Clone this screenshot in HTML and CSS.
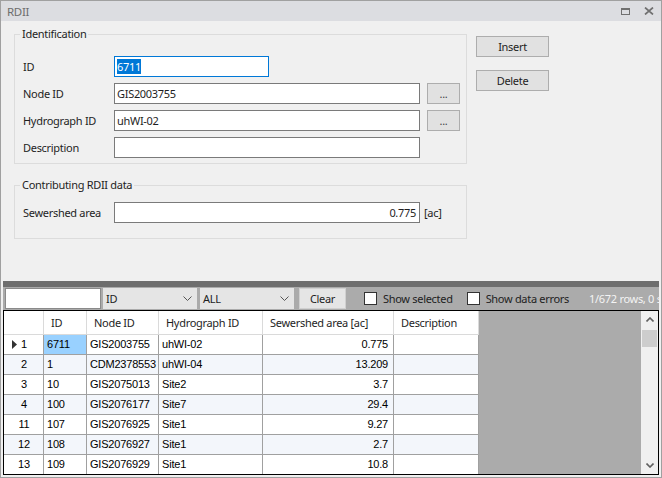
FILE: index.html
```html
<!DOCTYPE html>
<html lang="en">
<head>
  <meta charset="UTF-8">
  <title>RDII</title>
  <link rel="stylesheet" href="styles.css">
</head>
<body>
  <div class="window">
    <div class="titlebar">
      <span class="title">RDII</span>
      <span class="tb-icons">
        <svg width="9" height="7" viewBox="0 0 9 7"><rect x="0.5" y="0.5" width="8" height="6" fill="none" stroke="#707070"/><rect x="0" y="0" width="9" height="2" fill="#707070"/></svg>
        <svg width="10" height="8" viewBox="0 0 10 8"><path d="M1 0.5 L9 7.5 M9 0.5 L1 7.5" stroke="#707070" stroke-width="1.7" fill="none"/></svg>
      </span>
    </div>

    <div class="editor">
      <div class="groups">
        <fieldset class="group ident">
          <legend>Identification</legend>
          <div class="rows">
            <div class="field"><label>ID</label><div class="textbox short"><span class="sel">6711</span></div></div>
            <div class="field"><label>Node ID</label><div class="textbox long">GIS2003755</div><button class="btn browse">...</button></div>
            <div class="field"><label>Hydrograph ID</label><div class="textbox long">uhWI-02</div><button class="btn browse">...</button></div>
            <div class="field"><label>Description</label><div class="textbox long"></div></div>
          </div>
        </fieldset>
        <fieldset class="group contrib">
          <legend>Contributing RDII data</legend>
          <div class="field"><label>Sewershed area</label><div class="textbox long num">0.775</div><span class="unit">[ac]</span></div>
        </fieldset>
      </div>
      <div class="actions">
        <button class="btn">Insert</button>
        <button class="btn">Delete</button>
      </div>
    </div>

    <div class="splitter"></div>

    <div class="lower">
      <div class="toolbar">
        <div class="search"></div>
        <div class="combo c-id">ID<svg width="9" height="5" viewBox="0 0 9 5"><polyline points="0.5,0.5 4.5,4.5 8.5,0.5" fill="none" stroke="#555"/></svg></div>
        <div class="combo c-all">ALL<svg width="9" height="5" viewBox="0 0 9 5"><polyline points="0.5,0.5 4.5,4.5 8.5,0.5" fill="none" stroke="#555"/></svg></div>
        <button class="btn clear">Clear</button>
        <span class="check ck1"></span><span class="check-label">Show selected</span>
        <span class="check ck2"></span><span class="check-label">Show data errors</span>
        <span class="status">1/672 rows, 0 selected</span>
      </div>

      <div class="grid">
        <div class="table">
          <div class="row head">
            <div></div><div>ID</div><div>Node ID</div><div>Hydrograph ID</div><div>Sewershed area [ac]</div><div>Description</div>
          </div>
          <div class="row">
            <div class="rh"><svg class="current" width="5" height="9" viewBox="0 0 5 9"><polygon points="0,0 5,4.5 0,9" fill="#333"/></svg>1</div><div class="selected">6711</div><div>GIS2003755</div><div>uhWI-02</div><div class="num">0.775</div><div></div>
          </div>
          <div class="row alt">
            <div class="rh">2</div><div>1</div><div>CDM2378553</div><div>uhWI-04</div><div class="num">13.209</div><div></div>
          </div>
          <div class="row">
            <div class="rh">3</div><div>10</div><div>GIS2075013</div><div>Site2</div><div class="num">3.7</div><div></div>
          </div>
          <div class="row alt">
            <div class="rh">4</div><div>100</div><div>GIS2076177</div><div>Site7</div><div class="num">29.4</div><div></div>
          </div>
          <div class="row">
            <div class="rh">11</div><div>107</div><div>GIS2076925</div><div>Site1</div><div class="num">9.27</div><div></div>
          </div>
          <div class="row alt">
            <div class="rh">12</div><div>108</div><div>GIS2076927</div><div>Site1</div><div class="num">2.7</div><div></div>
          </div>
          <div class="row">
            <div class="rh">13</div><div>109</div><div>GIS2076929</div><div>Site1</div><div class="num">10.8</div><div></div>
          </div>
        </div>
        <div class="vscroll">
          <div class="arrow"><svg width="8" height="5" viewBox="0 0 8 5"><polyline points="0.5,4.5 4,1 7.5,4.5" fill="none" stroke="#606060" stroke-width="1.6"/></svg></div>
          <div class="thumb"></div>
          <div class="track"></div>
          <div class="arrow"><svg width="8" height="5" viewBox="0 0 8 5"><polyline points="0.5,0.5 4,4 7.5,0.5" fill="none" stroke="#606060" stroke-width="1.6"/></svg></div>
        </div>
      </div>
    </div>
  </div>
</body>
</html>
```

FILE: styles.css
```css
* { box-sizing: border-box; }
body { margin: 0; font-family: "Noto Sans", sans-serif; font-size: 11px; letter-spacing: -0.3px; color: #1e1e1e; }

.window { width: 662px; height: 478px; border: 1px solid #a0a0a0; background: #f0f0f0; display: flex; flex-direction: column; overflow: hidden; }

.titlebar { height: 20px; flex: none; background: #dcdde1; display: flex; align-items: center; justify-content: space-between; padding: 0 7px 0 6px; }
.title { color: #6d6d6d; font-size: 11.5px; }
.tb-icons { display: flex; align-items: center; gap: 14px; }

.editor { height: 260px; flex: none; display: flex; padding-left: 13px; }
.groups { display: flex; flex-direction: column; gap: 14px; padding-top: 6px; }
.group { margin: 0; width: 453px; min-width: 0; border: 1px solid #dcdcdc; }
.group legend { padding: 0 2px; margin-left: -3px; line-height: 14px; }
.ident { padding: 15px 0 5px 8px; }
.contrib { padding: 10px 0 15px 8px; }
.rows { display: flex; flex-direction: column; gap: 6px; }

.field { display: flex; align-items: center; height: 21px; }
.field label { width: 91px; flex: none; }
.textbox { height: 21px; flex: none; border: 1px solid #7a7a7a; background: #fff; padding: 0 2px; line-height: 19px; white-space: nowrap; overflow: hidden; }
.textbox.short { width: 155px; border-color: #0078d7; }
.textbox.long { width: 306px; }
.textbox.num { text-align: right; padding-right: 3px; }
.sel { background: #0078d7; color: #fff; }
.unit { margin-left: 4px; }

.btn { font-family: inherit; font-size: 11px; letter-spacing: inherit; color: #1e1e1e; background: #e1e1e1; border: 1px solid #adadad; padding: 0; height: 21px; }
.browse { width: 33px; flex: none; margin-left: 7px; color: #444; }

.actions { display: flex; flex-direction: column; gap: 13px; padding-top: 15px; margin-left: 9px; }
.actions .btn { width: 73px; }

.splitter { height: 6px; flex: none; background: #6e6e6e; margin: 0 2px; }

.lower { flex: 1; min-height: 0; padding: 0 2px 2px; display: flex; flex-direction: column; }

.toolbar { height: 23px; flex: none; background: #ababab; display: flex; align-items: center; padding-left: 2px; white-space: nowrap; overflow: hidden; }
.search { width: 96px; height: 21px; flex: none; background: #fff; border: 1px solid #8a8a8a; }
.combo { width: 94px; height: 21px; flex: none; background: #e5e5e5; display: flex; align-items: center; justify-content: space-between; padding: 0 5px 0 3px; }
.c-id { margin-left: 2px; }
.c-all { margin-left: 3px; }
.clear { width: 47px; flex: none; margin-left: 5px; background: #e5e5e5; border-color: #d0d0d0; }
.check { width: 13px; height: 13px; flex: none; background: #fff; border: 1px solid #333; }
.ck1 { margin-left: 18px; }
.ck2 { margin-left: 14px; }
.check-label { margin-left: 6px; color: #222; }
.status { margin-left: 20px; color: #f4f4f4; }

.grid { flex: 1; min-height: 0; border: 1px solid #000; display: flex; }
.table { flex: 1; background: #ababab; overflow: hidden; font-family: "Liberation Sans", sans-serif; font-size: 11px; letter-spacing: -0.2px; color: #000; }
.row { display: grid; grid-template-columns: 40px 43px 72px 104px 131px 85px; width: 475px; height: 20px; background: #fff; }
.row.alt { background: #f3f6fb; }
.row > div { border-right: 1px solid #a0a0a0; border-bottom: 1px solid #a0a0a0; padding: 0 2px 0 3px; line-height: 19px; white-space: nowrap; overflow: hidden; }
.row.head { height: 24px; background: #fff; }
.row.head > div { border-color: #dadada; line-height: 23px; padding-left: 7px; font-family: "Noto Sans", sans-serif; letter-spacing: -0.3px; color: #1e1e1e; }
.row .num { text-align: right; padding-right: 5px; }
.row .rh { text-align: center; position: relative; }
.current { position: absolute; left: 8px; top: 5px; }
.row .selected { background: #99d1ff; }

.vscroll { width: 17px; flex: none; background: #f0f0f0; display: flex; flex-direction: column; align-items: center; }
.arrow { height: 17px; width: 17px; display: flex; align-items: center; justify-content: center; }
.thumb { width: 15px; height: 17px; margin-top: 2px; background: #cdcdcd; }
.track { flex: 1; }
```
